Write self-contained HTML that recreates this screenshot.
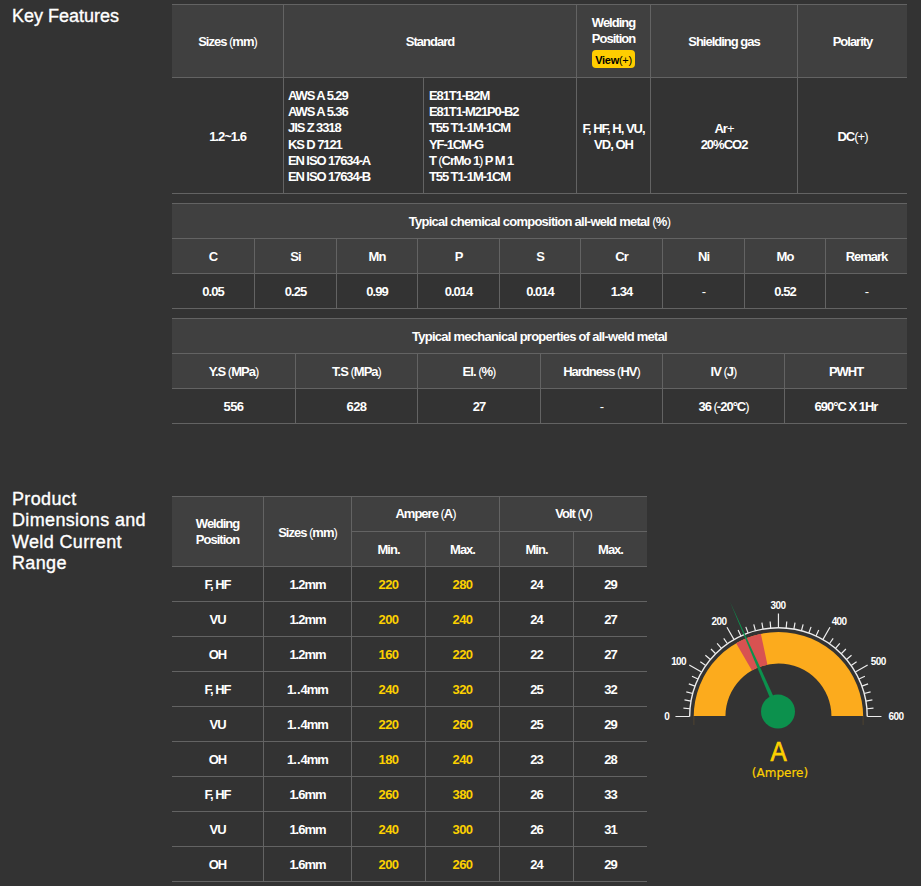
<!DOCTYPE html>
<html lang="en">
<head>
<meta charset="utf-8">
<title>Key Features</title>
<style>
html,body{margin:0;padding:0;}
body{width:921px;height:886px;background:#333333;color:#fff;overflow:hidden;position:relative;
  font-family:"Liberation Sans","Noto Sans CJK KR",sans-serif;font-size:13px;font-weight:bold;}
h2{position:absolute;margin:0;left:12px;font-size:18px;line-height:21.33px;font-weight:normal;color:#fff;letter-spacing:0;-webkit-text-stroke:0.35px #fff;}
#h-key{top:6px;}
#h-prod{top:489px;width:156px;letter-spacing:0.35px;}
table{position:absolute;border-collapse:separate;border-spacing:0;table-layout:fixed;border-top:1px solid #636363;}
td,th{box-sizing:border-box;border:0;border-right:1px solid #636363;border-bottom:1px solid #636363;padding:2px 0 0 0;text-align:center;vertical-align:middle;
  font-size:13px;font-weight:bold;letter-spacing:-1px;line-height:16px;color:#fff;}
td:last-child,th:last-child{border-right:0;}
th{background:#404040;}
th.t{letter-spacing:-0.75px;}
td .d{letter-spacing:0;}
td i,th i{font-style:normal;font-weight:normal;}
th.wp{padding-top:1px;line-height:16px;}
th.wp2{line-height:16px;padding-top:0;}
#t4 th.h1{padding-top:0;}
td.l{text-align:left;padding-left:5px;line-height:16.25px;letter-spacing:-1.1px;}
td.y{color:#fcd000;letter-spacing:-0.6px;}
#t1{left:172px;top:4px;width:735px;}
#t2{left:172px;top:203px;width:735px;}
#t3{left:172px;top:318px;width:735px;}
#t4{left:172px;top:496px;width:475px;}
.btn{display:inline-block;background:#ffcd00;color:#000;border-radius:4px;font-size:11px;line-height:18px;height:18px;
  width:43px;margin-top:3px;letter-spacing:-0.3px;vertical-align:top;box-sizing:border-box;padding-top:2px;line-height:16px;}
.btn i{font-style:normal;font-weight:normal;}
#gauge{position:absolute;left:650px;top:580px;}
</style>
</head>
<body>
<h2 id="h-key">Key Features</h2>
<h2 id="h-prod">Product Dimensions and Weld Current Range</h2>

<table id="t1">
<colgroup><col style="width:112px"><col style="width:140px"><col style="width:153px"><col style="width:74px"><col style="width:147px"><col style="width:109px"></colgroup>
<tr style="height:73px"><th>Sizes <i>(</i>mm<i>)</i></th><th colspan="2">Standard</th><th class="wp">Welding<br>Position<br><span class="btn">View<i>(+)</i></span></th><th>Shielding gas</th><th>Polarity</th></tr>
<tr style="height:116px"><td>1.2~1.6</td>
<td class="l" style="padding-left:4px">AWS A 5.29<br>AWS A 5.36<br>JIS Z 3318<br>KS D 7121<br>EN ISO 17634-A<br>EN ISO 17634-B</td>
<td class="l">E81T1-B2M<br>E81T1-M21P0-B2<br>T55 T1-1M-1CM<br>YF-1CM-G<br>T <i>(</i>CrMo 1<i>)</i> P M 1<br>T55 T1-1M-1CM</td>
<td>F, HF, H, VU,<br>VD, OH</td><td>Ar<i>+</i><br>20%CO2</td><td>DC<i>(+)</i></td></tr>
</table>

<table id="t2">
<colgroup><col style="width:83px"><col style="width:82px"><col style="width:81px"><col style="width:82px"><col style="width:81px"><col style="width:82px"><col style="width:82px"><col style="width:81px"><col style="width:81px"></colgroup>
<tr style="height:35px"><th class="t" colspan="9">Typical chemical composition all-weld metal <i>(</i>%<i>)</i></th></tr>
<tr style="height:35px"><th>C</th><th>Si</th><th>Mn</th><th>P</th><th>S</th><th>Cr</th><th>Ni</th><th>Mo</th><th>Remark</th></tr>
<tr style="height:35px"><td>0.05</td><td>0.25</td><td>0.99</td><td>0.014</td><td>0.014</td><td>1.34</td><td><i>-</i></td><td>0.52</td><td><i>-</i></td></tr>
</table>

<table id="t3">
<colgroup><col style="width:124px"><col style="width:122px"><col style="width:123px"><col style="width:122px"><col style="width:122px"><col style="width:122px"></colgroup>
<tr style="height:35px"><th class="t" colspan="6">Typical mechanical properties of all-weld metal</th></tr>
<tr style="height:35px"><th>Y.S <i>(</i>MPa<i>)</i></th><th>T.S <i>(</i>MPa<i>)</i></th><th>El. <i>(</i>%<i>)</i></th><th>Hardness <i>(</i>HV<i>)</i></th><th>IV <i>(</i>J<i>)</i></th><th>PWHT</th></tr>
<tr style="height:35px"><td style="letter-spacing:-0.6px">556</td><td style="letter-spacing:-0.6px">628</td><td>27</td><td><i>-</i></td><td>36 <i>(</i>-20°C<i>)</i></td><td>690°C X 1Hr</td></tr>
</table>

<table id="t4">
<colgroup><col style="width:92px"><col style="width:88px"><col style="width:74px"><col style="width:74px"><col style="width:74px"><col style="width:73px"></colgroup>
<tr style="height:35px"><th class="wp2" rowspan="2">Welding<br>Position</th><th rowspan="2">Sizes <i>(</i>mm<i>)</i></th><th class="h1" colspan="2">Ampere <i>(</i>A<i>)</i></th><th class="h1" colspan="2">Volt <i>(</i>V<i>)</i></th></tr>
<tr style="height:35px"><th>Min.</th><th>Max.</th><th>Min.</th><th>Max.</th></tr>
<tr style="height:35px"><td>F, HF</td><td>1.2mm</td><td class="y">220</td><td class="y">280</td><td>24</td><td>29</td></tr>
<tr style="height:35px"><td>VU</td><td>1.2mm</td><td class="y">200</td><td class="y">240</td><td>24</td><td>27</td></tr>
<tr style="height:35px"><td>OH</td><td>1.2mm</td><td class="y">160</td><td class="y">220</td><td>22</td><td>27</td></tr>
<tr style="height:35px"><td>F, HF</td><td>1<span class="d">..</span>4mm</td><td class="y">240</td><td class="y">320</td><td>25</td><td>32</td></tr>
<tr style="height:35px"><td>VU</td><td>1<span class="d">..</span>4mm</td><td class="y">220</td><td class="y">260</td><td>25</td><td>29</td></tr>
<tr style="height:35px"><td>OH</td><td>1<span class="d">..</span>4mm</td><td class="y">180</td><td class="y">240</td><td>23</td><td>28</td></tr>
<tr style="height:35px"><td>F, HF</td><td>1.6mm</td><td class="y">260</td><td class="y">380</td><td>26</td><td>33</td></tr>
<tr style="height:35px"><td>VU</td><td>1.6mm</td><td class="y">240</td><td class="y">300</td><td>26</td><td>31</td></tr>
<tr style="height:35px"><td>OH</td><td>1.6mm</td><td class="y">200</td><td class="y">260</td><td>24</td><td>29</td></tr>
</table>

<!--G0-->
<svg id="gauge" width="271" height="220" viewBox="0 0 271 220">
<clipPath id="bc"><rect x="0" y="0" width="271" height="136.05"/></clipPath>
<g clip-path="url(#bc)"><path d="M43.76,137.98A84.7,84.7 0 1 1 213.14,137.98L181.44,137.42A53,53 0 1 0 75.46,137.42Z" fill="#fcab1d"/></g>
<path d="M43.9,136v9M213.1,136v9" stroke="#fcab1d" stroke-opacity="0.13" stroke-width="1" fill="none"/>
<path d="M86.1,63.15A84.7,84.7 0 0 1 110.84,53.65L117.43,84.66A53,53 0 0 0 101.95,90.6Z" fill="#d85251"/>
<path d="M39.65,136.5A88.8,88.8 0 0 1 217.25,136.5" fill="none" stroke="#ececec" stroke-width="1.4"/>
<path d="M39.65,136.5L25.45,136.5M39.99,128.76L33.41,128.19M41,121.08L34.5,119.93M42.68,113.52L36.3,111.81M45.01,106.13L38.8,103.87M47.97,98.97L41.99,96.18M51.55,92.1L39.25,85M55.71,85.57L50.3,81.78M60.43,79.42L55.37,75.18M65.66,73.71L60.99,69.04M71.37,68.48L67.13,63.42M77.52,63.76L73.73,58.35M84.05,59.6L76.95,47.3M90.92,56.02L88.13,50.04M98.08,53.06L95.82,46.85M105.47,50.73L103.76,44.35M113.03,49.05L111.88,42.55M120.71,48.04L120.14,41.46M128.45,47.7L128.45,33.5M136.19,48.04L136.76,41.46M143.87,49.05L145.02,42.55M151.43,50.73L153.14,44.35M158.82,53.06L161.08,46.85M165.98,56.02L168.77,50.04M172.85,59.6L179.95,47.3M179.38,63.76L183.17,58.35M185.53,68.48L189.77,63.42M191.24,73.71L195.91,69.04M196.47,79.42L201.53,75.18M201.19,85.57L206.6,81.78M205.35,92.1L217.65,85M208.93,98.97L214.91,96.18M211.89,106.13L218.1,103.87M214.22,113.52L220.6,111.81M215.9,121.08L222.4,119.93M216.91,128.76L223.49,128.19M217.25,136.5L231.45,136.5" fill="none" stroke="#ececec" stroke-width="1.2"/>
<g fill="#fff" font-family="'Liberation Sans',sans-serif" font-size="10" font-weight="bold" text-anchor="middle" letter-spacing="-0.6">
<text x="16.8" y="140.4">0</text>
<text x="28.6" y="85.2">100</text>
<text x="68.9" y="45.3">200</text>
<text x="128" y="28.8">300</text>
<text x="189.1" y="45.3">400</text>
<text x="228.2" y="85.3">500</text>
<text x="245.9" y="140.4">600</text>
</g>
<polygon points="130.02,130.72 80,21.8 125.98,132.48" fill="#0c914d"/>
<circle cx="128" cy="131.6" r="17" fill="#0c914d"/>
<text x="128.7" y="181.2" transform="translate(128.7 0) scale(0.9 1) translate(-128.7 0)" text-anchor="middle" font-family="'Liberation Sans',sans-serif" font-size="27" font-weight="normal" fill="#fdd000" stroke="#fdd000" stroke-width="0.7">A</text>
<text x="130" y="196.5" text-anchor="middle" font-family="'DejaVu Sans','Liberation Sans',sans-serif" font-size="12" font-weight="normal" fill="#fdd000" stroke="#fdd000" stroke-width="0.2" letter-spacing="0">(Ampere)</text>
</svg>
<!--G1-->
</body>
</html>
